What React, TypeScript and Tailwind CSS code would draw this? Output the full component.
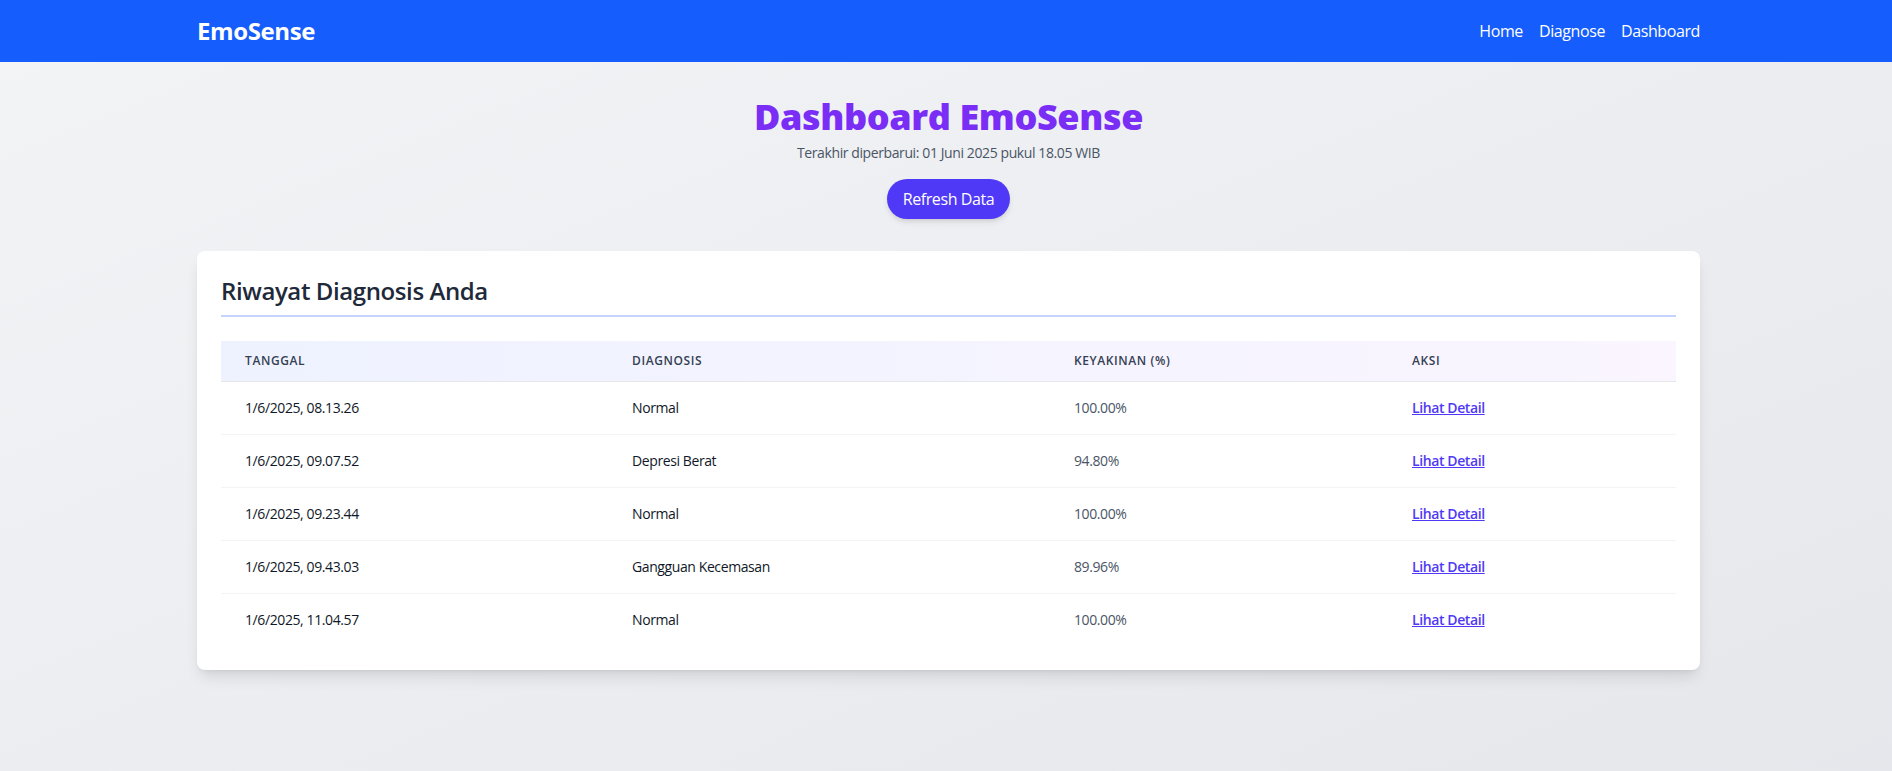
import React from 'react';

interface Diagnosis {
    tanggal: string;
    diagnosis: string;
    keyakinan: string;
}

const riwayat: Diagnosis[] = [
    { tanggal: '1/6/2025, 08.13.26', diagnosis: 'Normal', keyakinan: '100.00%' },
    { tanggal: '1/6/2025, 09.07.52', diagnosis: 'Depresi Berat', keyakinan: '94.80%' },
    { tanggal: '1/6/2025, 09.23.44', diagnosis: 'Normal', keyakinan: '100.00%' },
    { tanggal: '1/6/2025, 09.43.03', diagnosis: 'Gangguan Kecemasan', keyakinan: '89.96%' },
    { tanggal: '1/6/2025, 11.04.57', diagnosis: 'Normal', keyakinan: '100.00%' },
];

const Navbar: React.FC = () => {
    return (
        <nav className="bg-blue-600 h-[62px]">
            <div className="ml-[calc(50%-749px)] w-[1503px] h-full flex items-center justify-between">
                <a href="#" className="text-2xl font-bold text-white">EmoSense</a>
                <div className="flex gap-4 text-white">
                    <a href="#">Home</a>
                    <a href="#">Diagnose</a>
                    <a href="#">Dashboard</a>
                </div>
            </div>
        </nav>
    )
}

const App: React.FC = () => {
    return (
        <div className="min-h-screen bg-gradient-to-br from-gray-100 to-gray-200 font-['Open_Sans',sans-serif] tracking-[-0.025em]">
            <Navbar />

            <main className="ml-[calc(50%-749px)] w-[1503px] pt-[35px] pb-16">
                {/* header */}
                <div className="flex flex-col items-center">
                    <h1 className="text-4xl font-extrabold text-[#7a2ef5]">Dashboard EmoSense</h1>
                    <p className="mt-1.5 text-sm text-gray-600">Terakhir diperbarui: 01 Juni 2025 pukul 18.05 WIB</p>
                    <button className="mt-4 px-4 py-2 rounded-full bg-indigo-600 text-white shadow-md">
                        Refresh Data
                    </button>
                </div>

                {/* riwayat */}
                <div className="mt-8 bg-white rounded-lg shadow-lg p-6">
                    <h2 className="text-2xl font-semibold text-gray-800 pb-2 border-b-2 border-indigo-200">
                        Riwayat Diagnosis Anda
                    </h2>
                    <table className="mt-6 w-full text-left">
                        <thead className="bg-gradient-to-r from-indigo-50 to-purple-50 border-b border-gray-200">
                            <tr className="text-xs font-semibold uppercase tracking-wider text-gray-700">
                                <th className="px-6 py-3 w-[387px] font-semibold">Tanggal</th>
                                <th className="px-6 py-3 w-[442px] font-semibold">Diagnosis</th>
                                <th className="px-6 py-3 w-[338px] font-semibold">Keyakinan (%)</th>
                                <th className="px-6 py-3 font-semibold">Aksi</th>
                            </tr>
                        </thead>
                        <tbody className="divide-y divide-gray-100 text-sm">
                            {riwayat.map((item, i) => (
                                <tr key={i}>
                                    <td className="px-6 py-4 text-gray-900">{item.tanggal}</td>
                                    <td className="px-6 py-4 text-gray-900">{item.diagnosis}</td>
                                    <td className="px-6 py-4 text-gray-600">{item.keyakinan}</td>
                                    <td className="px-6 py-4">
                                        <a href="#" className="font-semibold text-indigo-600 underline">Lihat Detail</a>
                                    </td>
                                </tr>
                            ))}
                        </tbody>
                    </table>
                </div>
            </main>
        </div>
    )
}

export default App;
